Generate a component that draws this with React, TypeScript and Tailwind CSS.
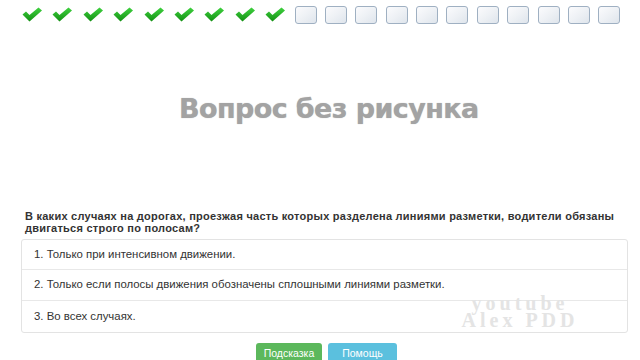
import React from "react";

function Check() {
  return (
    <svg width="22" height="18" viewBox="0 0 22 18">
      <defs>
        <linearGradient id="cg" x1="0" y1="0" x2="0" y2="1">
          <stop offset="0" stopColor="#3fd23f" />
          <stop offset="1" stopColor="#139013" />
        </linearGradient>
      </defs>
      <path d="M1.5 8.5 L5 5.5 L8.5 9 L17.5 1.5 L21 4.5 L8.5 15.5 Z" fill="url(#cg)" />
    </svg>
  );
}

function Box() {
  return (
    <div className="w-[22px] h-[18px] rounded-[3px] border border-[#9fb0c2] bg-gradient-to-br from-[#fbfbfd] via-[#eef1f5] to-[#dfe5ec]" />
  );
}

export default function App() {
  const checks = Array.from({ length: 9 });
  const boxes = Array.from({ length: 11 });
  return (
    <div className="relative w-[640px] h-[360px] bg-white overflow-hidden" style={{ fontFamily: '"Liberation Sans", Arial, sans-serif' }}>
      <div className="flex items-center gap-[8.4px] pl-[21px] pt-[4px] h-[26px]">
        {checks.map((_, i) => (
          <Check key={"c" + i} />
        ))}
        {boxes.map((_, i) => (
          <Box key={"b" + i} />
        ))}
      </div>
      <div className="mt-[66px] pl-[179px] text-[27px] font-bold text-[#a3a3a3] leading-[34px] tracking-[-0.6px] [text-shadow:0_0_1px_#b5b5b5]" style={{ fontFamily: '"DejaVu Sans", sans-serif' }}>
        Вопрос без рисунка
      </div>
      <div className="mt-[84px] pl-[25px] pr-[14px] text-[11px] font-bold text-[#333] leading-[12px] tracking-[0.25px]">
        В каких случаях на дорогах, проезжая часть которых разделена линиями разметки, водители обязаны двигаться строго по полосам?
      </div>
      <div className="mt-[5px] ml-[21px] w-[607px] border border-[#e3e3e3] rounded-[3px] text-[11.4px] text-[#333]">
        <div className="h-[30px] flex items-center pl-[12px] border-b border-[#e8e8e8]">1. Только при интенсивном движении.</div>
        <div className="h-[31px] flex items-center pl-[12px] border-b border-[#e8e8e8]">2. Только если полосы движения обозначены сплошными линиями разметки.</div>
        <div className="h-[31px] flex items-center pl-[12px]">3. Во всех случаях.</div>
      </div>
      <div className="mt-[10px] flex gap-[6px] pl-[256px]">
        <div className="w-[66px] h-[22px] rounded-[3px] bg-[#5cb85c] text-white text-[10.5px] flex items-center justify-center">Подсказка</div>
        <div className="w-[69px] h-[22px] rounded-[3px] bg-[#5bc0de] text-white text-[10.5px] flex items-center justify-center">Помощь</div>
      </div>
      <div className="absolute left-[432px] top-[295px] w-[176px] text-center text-[#e4e4e4] font-bold text-[20px] leading-[17px] tracking-[4px]" style={{ fontFamily: '"Liberation Serif", serif' }}>
        <div>youtube</div>
        <div>Alex PDD</div>
      </div>
    </div>
  );
}
